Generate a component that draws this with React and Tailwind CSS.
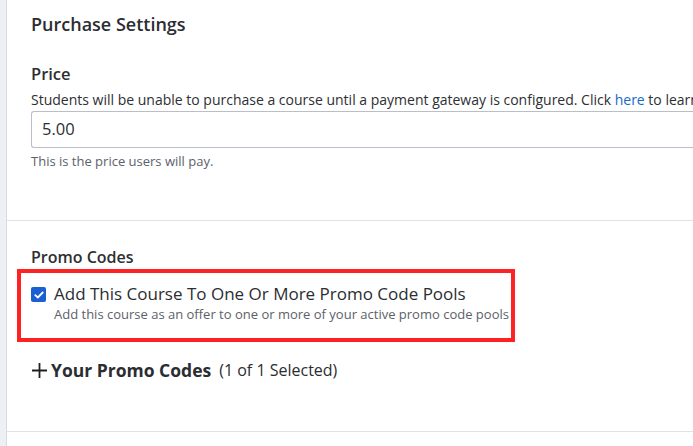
import React from "react";

function App() {
  return (
    <div
      className="flex h-[446px] w-[693px] overflow-hidden bg-white text-[#2d2f33]"
      style={{ fontFamily: "'Open Sans', sans-serif" }}
    >
      <div className="w-[7px] shrink-0 bg-[#edf1f6] border-r border-[#d9dbde]" />
      <div className="flex-1 min-w-0 overflow-hidden">
        <div className="pl-6 pt-[11px] pb-[49px] border-b border-[#e2e2e2]">
          <h2 className="text-[18px] font-semibold leading-[26px] text-[#2b2d31]">Purchase Settings</h2>
          <div className="mt-[26px]">
            <div className="text-[16.5px] font-semibold leading-[22px]">Price</div>
            <p className="mt-[5px] text-[14px] leading-[20px] whitespace-nowrap">
              Students will be unable to purchase a course until a payment gateway is configured. Click{" "}
              <a className="text-[#1769c7]">here</a> to learn more
            </p>
            <div className="mt-[1px] h-[37px] border border-r-0 border-[#b8bfc8] rounded-l-[3px] pl-[10px] flex items-center text-[16.5px]">
              5.00
            </div>
            <p className="mt-[3px] text-[13px] leading-[20px] text-[#5c6169]">This is the price users will pay.</p>
          </div>
        </div>
        <div className="pt-[25px] pb-[49px] border-b border-[#e2e2e2]">
          <div className="pl-6 text-[16px] font-semibold leading-[22px]">Promo Codes</div>
          <div className="mt-[1px] ml-[10px] w-[498px] h-[73px] border-4 border-[#ff2222] pl-[10px] pt-[11px] flex gap-[8px]">
            <div className="mt-[3px] w-[15px] h-[15px] rounded-[2px] bg-[#1b5fd0] flex items-center justify-center shrink-0">
              <svg width="10" height="8" viewBox="0 0 10 8" fill="none">
                <path d="M1.3 4.2 L3.8 6.5 L8.7 1.5" stroke="white" strokeWidth="1.8" strokeLinecap="round" strokeLinejoin="round" />
              </svg>
            </div>
            <div>
              <div className="text-[17px] leading-[20px] text-[#2b2d31] whitespace-nowrap">Add This Course To One Or More Promo Code Pools</div>
              <div className="text-[13px] leading-[20px] text-[#5c6169] whitespace-nowrap">Add this course as an offer to one or more of your active promo code pools</div>
            </div>
          </div>
          <div className="pl-6 mt-[16px] flex items-center">
            <svg width="17" height="17" viewBox="0 0 17 17" className="mr-[3px]">
              <path d="M8.5 1 V16 M1 8.5 H16" stroke="#1f2023" strokeWidth="1.8" />
            </svg>
            <span className="text-[17.5px] font-bold leading-[24px] text-[#2b2d31]">Your Promo Codes</span>
            <span className="ml-[8px] text-[16px] leading-[24px] text-[#2b2d31]">(1 of 1 Selected)</span>
          </div>
        </div>
      </div>
    </div>
  );
}

export default App;
